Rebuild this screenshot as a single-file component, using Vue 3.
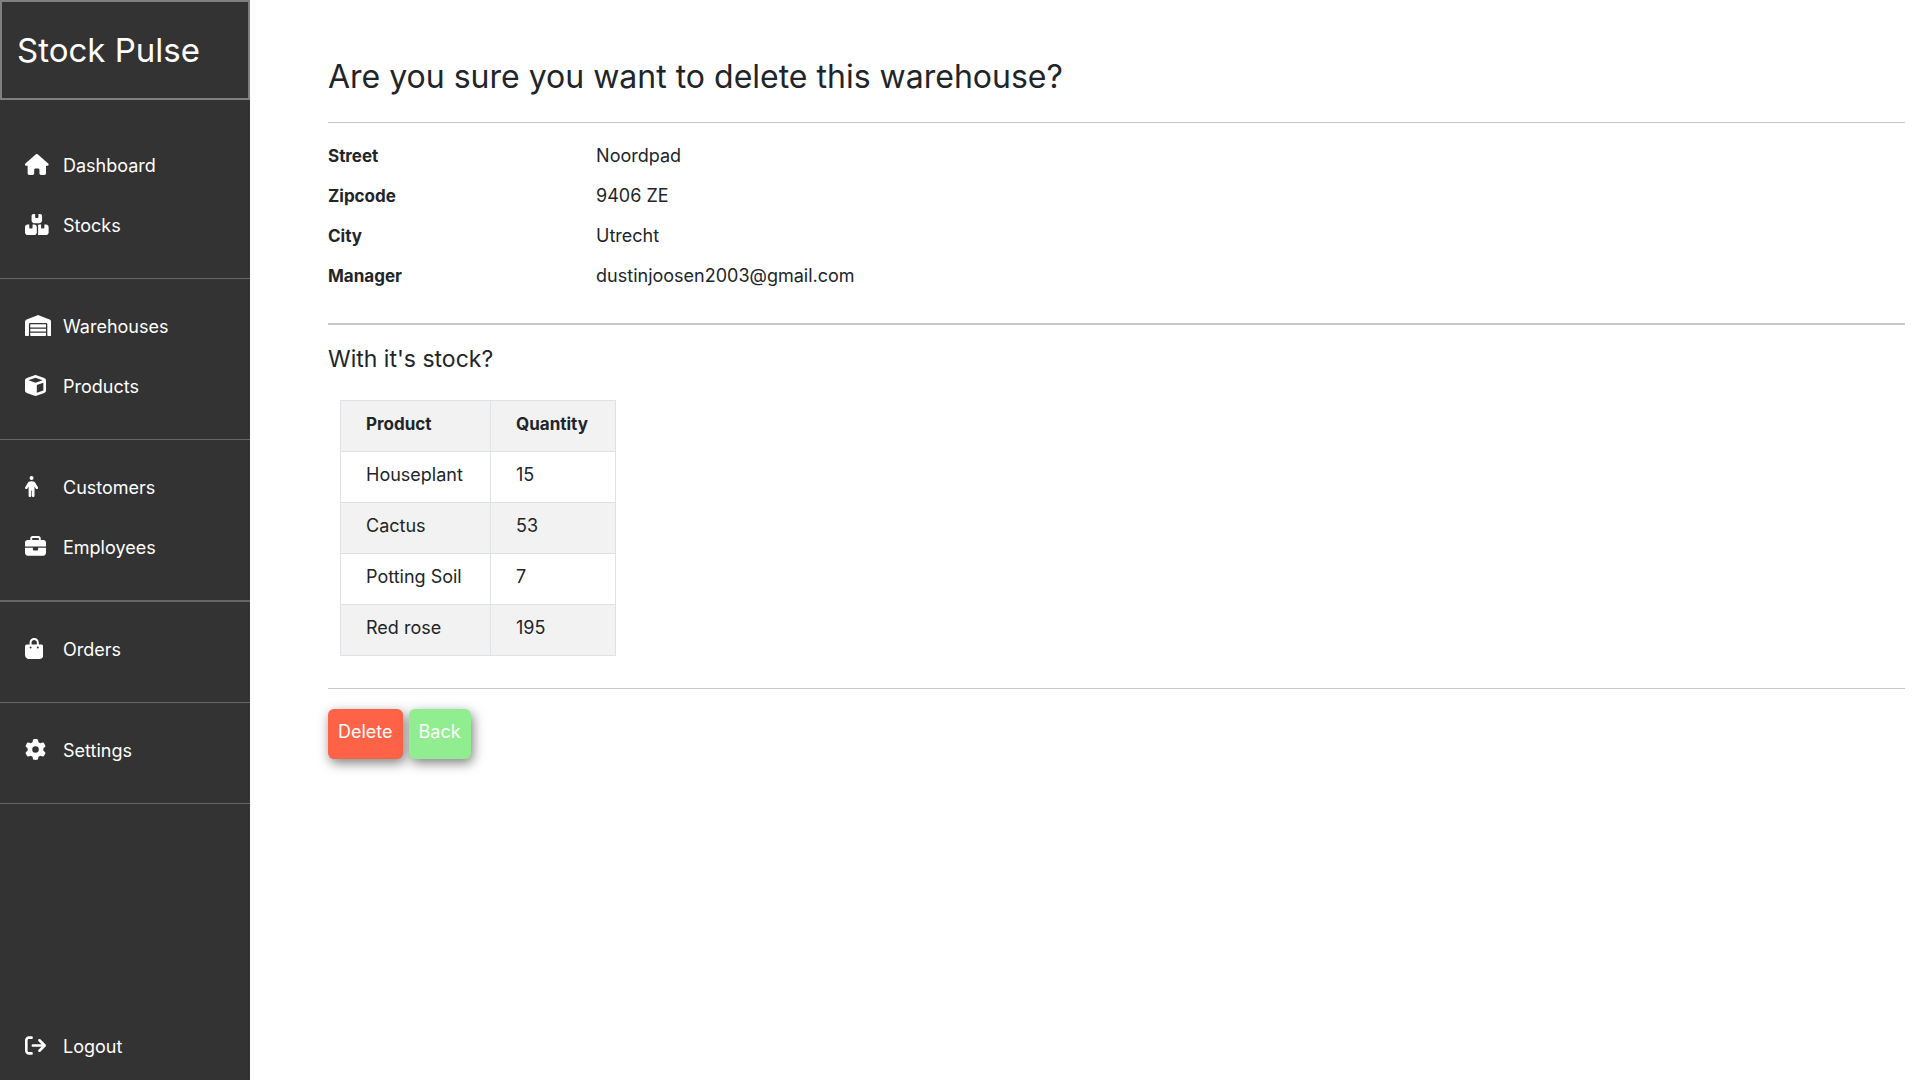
<script setup>
const icons = {
  house: { w: 576, d: 'M575.8 255.5c0 18-15 32.1-32 32.1h-32l.7 160.2c0 2.7-.2 5.4-.5 8.1V472c0 22.1-17.9 40-40 40H456c-1.1 0-2.2 0-3.3-.1c-1.4 .1-2.8 .1-4.2 .1H416 392c-22.1 0-40-17.9-40-40V448 384c0-17.7-14.3-32-32-32H256c-17.7 0-32 14.3-32 32v64 24c0 22.1-17.9 40-40 40H160 128.1c-1.5 0-3-.1-4.5-.2c-1.2 .1-2.4 .2-3.6 .2H104c-22.1 0-40-17.9-40-40V360c0-.9 0-1.9 .1-2.8V287.6H32c-18 0-32-14-32-32.1c0-9 3-17 10-24L266.4 8c7-7 15-8 22-8s15 2 21 7L564.8 231.5c8 7 12 15 11 24z' },
  boxes: { w: 576, d: 'M248 0H208c-26.5 0-48 21.5-48 48V160c0 35.3 28.7 64 64 64H352c35.3 0 64-28.7 64-64V48c0-26.5-21.5-48-48-48H328V80c0 8.8-7.2 16-16 16H264c-8.8 0-16-7.2-16-16V0zM64 256c-35.3 0-64 28.7-64 64V448c0 35.3 28.7 64 64 64H224c35.3 0 64-28.7 64-64V320c0-35.3-28.7-64-64-64H184v80c0 8.8-7.2 16-16 16H120c-8.8 0-16-7.2-16-16V256H64zM352 512H512c35.3 0 64-28.7 64-64V320c0-35.3-28.7-64-64-64H472v80c0 8.8-7.2 16-16 16H408c-8.8 0-16-7.2-16-16V256H352c-15 0-28.8 5.1-39.7 13.8c4.9 10.4 7.7 22 7.7 34.2V464c0 12.2-2.8 23.8-7.7 34.2C323.2 506.9 337 512 352 512z' },
  warehouse: { w: 640, d: 'M0 488V171.3c0-26.2 15.9-49.7 40.2-59.4L308.1 4.8c7.6-3.1 16.1-3.1 23.8 0L599.8 111.9c24.3 9.7 40.2 33.3 40.2 59.4V488c0 13.3-10.7 24-24 24H568c-13.3 0-24-10.7-24-24V224c0-17.7-14.3-32-32-32H128c-17.7 0-32 14.3-32 32V488c0 13.3-10.7 24-24 24H24c-13.3 0-24-10.7-24-24zm488 24l-336 0c-13.3 0-24-10.7-24-24V432H512l0 56c0 13.3-10.7 24-24 24zM128 400V336H512v64H128zm0-96V224H512l0 80H128z' },
  cube: { w: 512, d: 'M234.5 5.7c13.9-5 29.1-5 43.1 0l192 68.6C495 83.4 512 107.5 512 134.6V377.4c0 27-17 51.2-42.5 60.3l-192 68.6c-13.9 5-29.1 5-43.1 0l-192-68.6C17 428.6 0 404.5 0 377.4V134.6c0-27 17-51.2 42.5-60.3l192-68.6zM256 66L82.3 128 256 190l173.7-62L256 66zm32 368.6l160-57.1v-188L288 246.6v188z' },
  person: { w: 320, d: 'M112 48a48 48 0 1 1 96 0 48 48 0 1 1 -96 0zm40 304V480c0 17.7-14.3 32-32 32s-32-14.3-32-32V256.9L59.4 304.5c-9.1 15.1-28.8 20-43.9 10.9s-20-28.8-10.9-43.9l58.3-97c17.4-28.9 48.6-46.6 82.3-46.6h29.7c33.7 0 64.9 17.7 82.3 46.6l58.3 97c9.1 15.1 4.2 34.8-10.9 43.9s-34.8 4.2-43.9-10.9L232 256.9V480c0 17.7-14.3 32-32 32s-32-14.3-32-32V352H152z' },
  briefcase: { w: 512, d: 'M184 48H328c4.4 0 8 3.6 8 8V96H176V56c0-4.4 3.6-8 8-8zm-56 8V96H64C28.7 96 0 124.7 0 160v96H192 320 512V160c0-35.3-28.7-64-64-64H384V56c0-30.9-25.1-56-56-56H184c-30.9 0-56 25.1-56 56zM512 288H320v32c0 17.7-14.3 32-32 32H224c-17.7 0-32-14.3-32-32V288H0V416c0 35.3 28.7 64 64 64H448c35.3 0 64-28.7 64-64V288z' },
  bag: { w: 448, d: 'M160 112c0-35.3 28.7-64 64-64s64 28.7 64 64v48H160V112zm-48 48H48c-26.5 0-48 21.5-48 48V416c0 53 43 96 96 96H352c53 0 96-43 96-96V208c0-26.5-21.5-48-48-48H336V112C336 50.1 285.9 0 224 0S112 50.1 112 112v48zm24 48a24 24 0 1 1 0 48 24 24 0 1 1 0-48zm152 24a24 24 0 1 1 48 0 24 24 0 1 1 -48 0z' },
  gear: { w: 512, d: 'M495.9 166.6c3.2 8.7 .5 18.4-6.4 24.6l-43.3 39.4c1.1 8.3 1.7 16.8 1.7 25.4s-.6 17.1-1.7 25.4l43.3 39.4c6.9 6.2 9.6 15.9 6.4 24.6c-4.4 11.9-9.7 23.3-15.8 34.3l-4.7 8.1c-6.6 11-14 21.4-22.1 31.2c-5.9 7.2-15.7 9.6-24.5 6.8l-55.7-17.7c-13.4 10.3-28.2 18.9-44 25.4l-12.5 57.1c-2 9.1-9 16.3-18.2 17.8c-13.8 2.3-28 3.5-42.5 3.5s-28.7-1.2-42.5-3.5c-9.2-1.5-16.2-8.7-18.2-17.8l-12.5-57.1c-15.8-6.5-30.6-15.1-44-25.4L83.1 425.9c-8.8 2.8-18.6 .3-24.5-6.8c-8.1-9.8-15.5-20.2-22.1-31.2l-4.7-8.1c-6.1-11-11.4-22.4-15.8-34.3c-3.2-8.7-.5-18.4 6.4-24.6l43.3-39.4C64.6 273.1 64 264.6 64 256s.6-17.1 1.7-25.4L22.4 191.2c-6.9-6.2-9.6-15.9-6.4-24.6c4.4-11.9 9.7-23.3 15.8-34.3l4.7-8.1c6.6-11 14-21.4 22.1-31.2c5.9-7.2 15.7-9.6 24.5-6.8l55.7 17.7c13.4-10.3 28.2-18.9 44-25.4l12.5-57.1c2-9.1 9-16.3 18.2-17.8C227.3 1.2 241.5 0 256 0s28.7 1.2 42.5 3.5c9.2 1.5 16.2 8.7 18.2 17.8l12.5 57.1c15.8 6.5 30.6 15.1 44 25.4l55.7-17.7c8.8-2.8 18.6-.3 24.5 6.8c8.1 9.8 15.5 20.2 22.1 31.2l4.7 8.1c6.1 11 11.4 22.4 15.8 34.3zM256 336a80 80 0 1 0 0-160 80 80 0 1 0 0 160z' },
  exit: { w: 512, d: 'M502.6 278.6c12.5-12.5 12.5-32.8 0-45.3l-128-128c-12.5-12.5-32.8-12.5-45.3 0s-12.5 32.8 0 45.3L402.7 224 192 224c-17.7 0-32 14.3-32 32s14.3 32 32 32l210.7 0-73.4 73.4c-12.5 12.5-12.5 32.8 0 45.3s32.8 12.5 45.3 0l128-128zM160 96c17.7 0 32-14.3 32-32s-14.3-32-32-32L96 32C43 32 0 75 0 128L0 384c0 53 43 96 96 96l64 0c17.7 0 32-14.3 32-32s-14.3-32-32-32l-64 0c-17.7 0-32-14.3-32-32l0-256c0-17.7 14.3-32 32-32l64 0z' },
}

const groups = [
  { links: [{ label: 'Dashboard', icon: icons.house }, { label: 'Stocks', icon: icons.boxes }] },
  { links: [{ label: 'Warehouses', icon: icons.warehouse }, { label: 'Products', icon: icons.cube }] },
  { links: [{ label: 'Customers', icon: icons.person }, { label: 'Employees', icon: icons.briefcase }], strong: true },
  { links: [{ label: 'Orders', icon: icons.bag }] },
  { links: [{ label: 'Settings', icon: icons.gear }] },
]

const details = [
  ['Street', 'Noordpad'],
  ['Zipcode', '9406 ZE'],
  ['City', 'Utrecht'],
  ['Manager', 'dustinjoosen2003@gmail.com'],
]

const stock = [
  ['Houseplant', 15],
  ['Cactus', 53],
  ['Potting Soil', 7],
  ['Red rose', 195],
]
</script>

<template>
  <div class="layout">
    <aside class="sidebar">
      <div class="brand">Stock Pulse</div>
      <nav class="nav">
        <ul v-for="(group, i) in groups" :key="i" class="group" :class="{ strong: group.strong }">
          <li v-for="link in group.links" :key="link.label">
            <a href="#" class="link">
              <span class="icon">
                <svg :viewBox="`0 0 ${link.icon.w} 512`" aria-hidden="true"><path :d="link.icon.d" /></svg>
              </span>
              <span class="label">{{ link.label }}</span>
            </a>
          </li>
        </ul>
      </nav>
      <a href="#" class="link logout">
        <span class="icon">
          <svg viewBox="0 0 512 512" aria-hidden="true"><path :d="icons.exit.d" /></svg>
        </span>
        <span class="label">Logout</span>
      </a>
    </aside>

    <main class="content">
      <h1>Are you sure you want to delete this warehouse?</h1>
      <hr>
      <dl class="details">
        <div v-for="[name, value] in details" :key="name" class="detail">
          <dt>{{ name }}</dt>
          <dd>{{ value }}</dd>
        </div>
      </dl>
      <hr class="thick">
      <h2>With it's stock?</h2>
      <table class="stock">
        <thead>
          <tr><th scope="col" class="product">Product</th><th scope="col">Quantity</th></tr>
        </thead>
        <tbody>
          <tr v-for="[product, quantity] in stock" :key="product">
            <td>{{ product }}</td>
            <td>{{ quantity }}</td>
          </tr>
        </tbody>
      </table>
      <hr>
      <div class="actions">
        <button type="button" class="delete">Delete</button>
        <button type="button" class="back">Back</button>
      </div>
    </main>
  </div>
</template>

<style>
body {
  margin: 0;
  background: #fff;
}
</style>

<style scoped>
* {
  box-sizing: border-box;
}

.layout {
  display: flex;
  min-height: 100vh;
  font-family: Inter, "Open Sans", sans-serif;
  font-size: 18px;
  line-height: 24px;
  color: #212529;
}

.sidebar {
  display: flex;
  flex: none;
  flex-direction: column;
  width: 250px;
  background: #333;
  color: #fff;
}

.brand {
  padding: 28px 15px;
  border: 2px solid gray;
  font-size: 33px;
  line-height: 40px;
}

.nav {
  padding-top: 18px;
}

.group {
  margin: 0;
  padding: 17px 0 23px;
  border-bottom: 1px solid #666;
  list-style: none;
}

.group.strong {
  border-bottom-width: 2px;
}

.link {
  display: flex;
  align-items: center;
  height: 60px;
  padding-left: 25px;
  color: inherit;
  text-decoration: none;
}

.icon {
  display: flex;
  width: 38px;
  padding-bottom: 1px;
}

.icon svg {
  height: 21px;
  fill: currentColor;
}

.label {
  padding-top: 2px;
}

.logout {
  margin: auto 0 4px;
}

.content {
  flex: 1;
  padding: 57px 15px 0 78px;
}

h1 {
  margin: 0;
  font-size: 32px;
  font-weight: 400;
  line-height: 40px;
}

hr {
  height: 1px;
  margin: 25px 0 0;
  border: 0;
  background: #c7c8c9;
}

hr.thick {
  height: 2px;
  margin-top: 27px;
}

.details {
  margin: 13px 0 0;
}

.detail {
  display: flex;
  align-items: center;
  height: 40px;
}

dt {
  flex: 0 0 17%;
  font-size: 17px;
  font-weight: 700;
}

dd {
  margin: 0;
}

h2 {
  margin: 18px 0 0;
  font-size: 23px;
  font-weight: 400;
  line-height: 32px;
}

.stock {
  width: 276px;
  margin: 25px 0 32px 12px;
  border-collapse: collapse;
  table-layout: fixed;
}

.stock th,
.stock td {
  height: 51px;
  padding: 0 0 4px 25px;
  border: 1px solid #dee2e6;
  text-align: left;
}

.stock th {
  font-size: 17px;
}

.stock .product {
  width: 150px;
}

.stock thead tr,
.stock tbody tr:nth-child(even) {
  background: #f2f2f2;
}

.actions {
  display: flex;
  gap: 6px;
  margin-top: 20px;
}

.actions button {
  height: 50px;
  padding: 0 10px 4px;
  border: 0;
  border-radius: 6px;
  box-shadow: 2px 4px 12px rgba(0, 0, 0, 0.5);
  color: #fff;
  font: inherit;
  cursor: pointer;
}

.delete {
  background: tomato;
}

.actions .back {
  background: lightgreen;
}
</style>
